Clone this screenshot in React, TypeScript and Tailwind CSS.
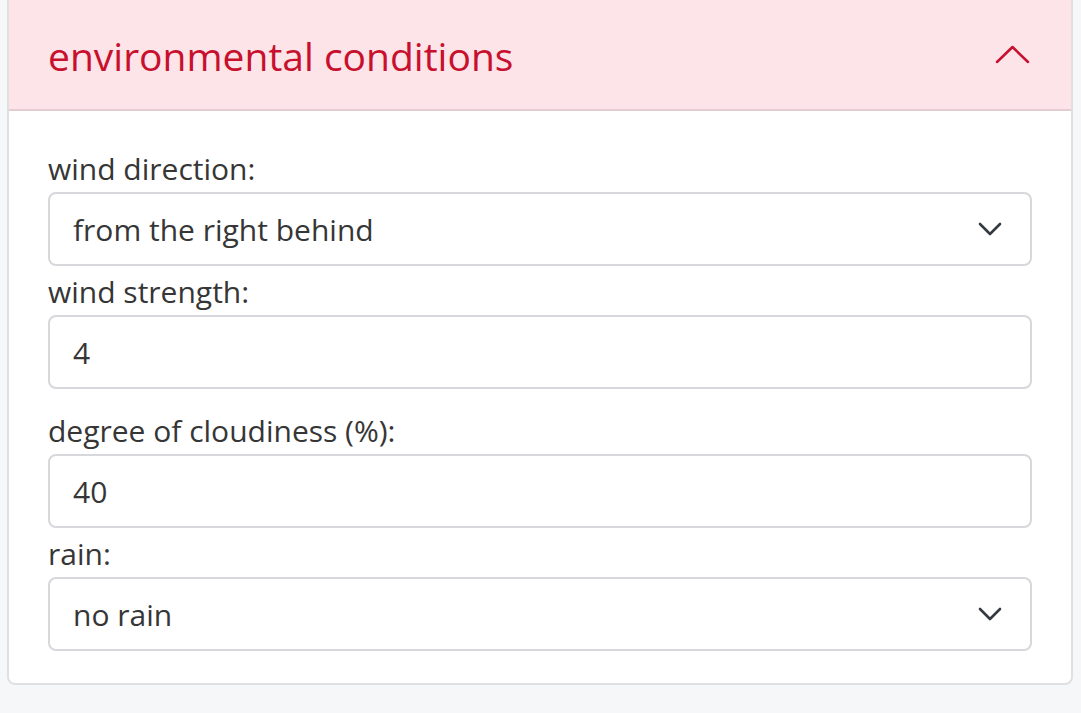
import React from "react";

function ChevronDown() {
  return (
    <svg width="24" height="14" viewBox="0 0 24 14" fill="none" className="shrink-0">
      <path d="M2 2 L12 12 L22 2" stroke="#343a40" strokeWidth="2.6" strokeLinecap="round" strokeLinejoin="round" />
    </svg>
  );
}

function ChevronUp() {
  return (
    <svg width="35" height="19" viewBox="0 0 35 19" fill="none" className="shrink-0">
      <path d="M2 17 L17.5 2 L33 17" stroke="#c8102e" strokeWidth="2.5" strokeLinecap="round" strokeLinejoin="round" />
    </svg>
  );
}

function Field({ label, value, select, gap }: { label: string; value: string; select?: boolean; gap: string }) {
  return (
    <div className={gap}>
      <div className="text-[30px] leading-[47px] text-[#363636]">{label}</div>
      <div className="h-[74px] rounded-[8px] border-2 border-[#d6d8db] bg-white pl-[23px] pr-[28px] flex items-center justify-between">
        <span className="text-[30px] text-[#363636]">{value}</span>
        {select && <ChevronDown />}
      </div>
    </div>
  );
}

export default function App() {
  return (
    <div className="w-[1081px] h-[713px] bg-[#f6f7f9] pl-[7px] pr-[8px] overflow-hidden" style={{ fontFamily: '"Open Sans", "Noto Sans", sans-serif' }}>
      <div className="bg-white border-2 border-t-0 border-[#e0e0e0] rounded-b-[8px]">
        <div className="h-[111px] bg-[#fce4e8] border-b-2 border-[#e3cdd1] flex items-center justify-between pl-[39px] pr-[41px]">
          <span className="text-[39px] text-[#c8102e] pt-[4px]">environmental conditions</span>
          <ChevronUp />
        </div>
        <div className="pt-[34px] pb-[32px] px-[39px]">
          <Field label="wind direction:" value="from the right behind" select gap="mb-[2px]" />
          <Field label="wind strength:" value="4" gap="mb-[18px]" />
          <Field label="degree of cloudiness (%):" value="40" gap="mb-[2px]" />
          <Field label="rain:" value="no rain" select gap="" />
        </div>
      </div>
    </div>
  );
}
